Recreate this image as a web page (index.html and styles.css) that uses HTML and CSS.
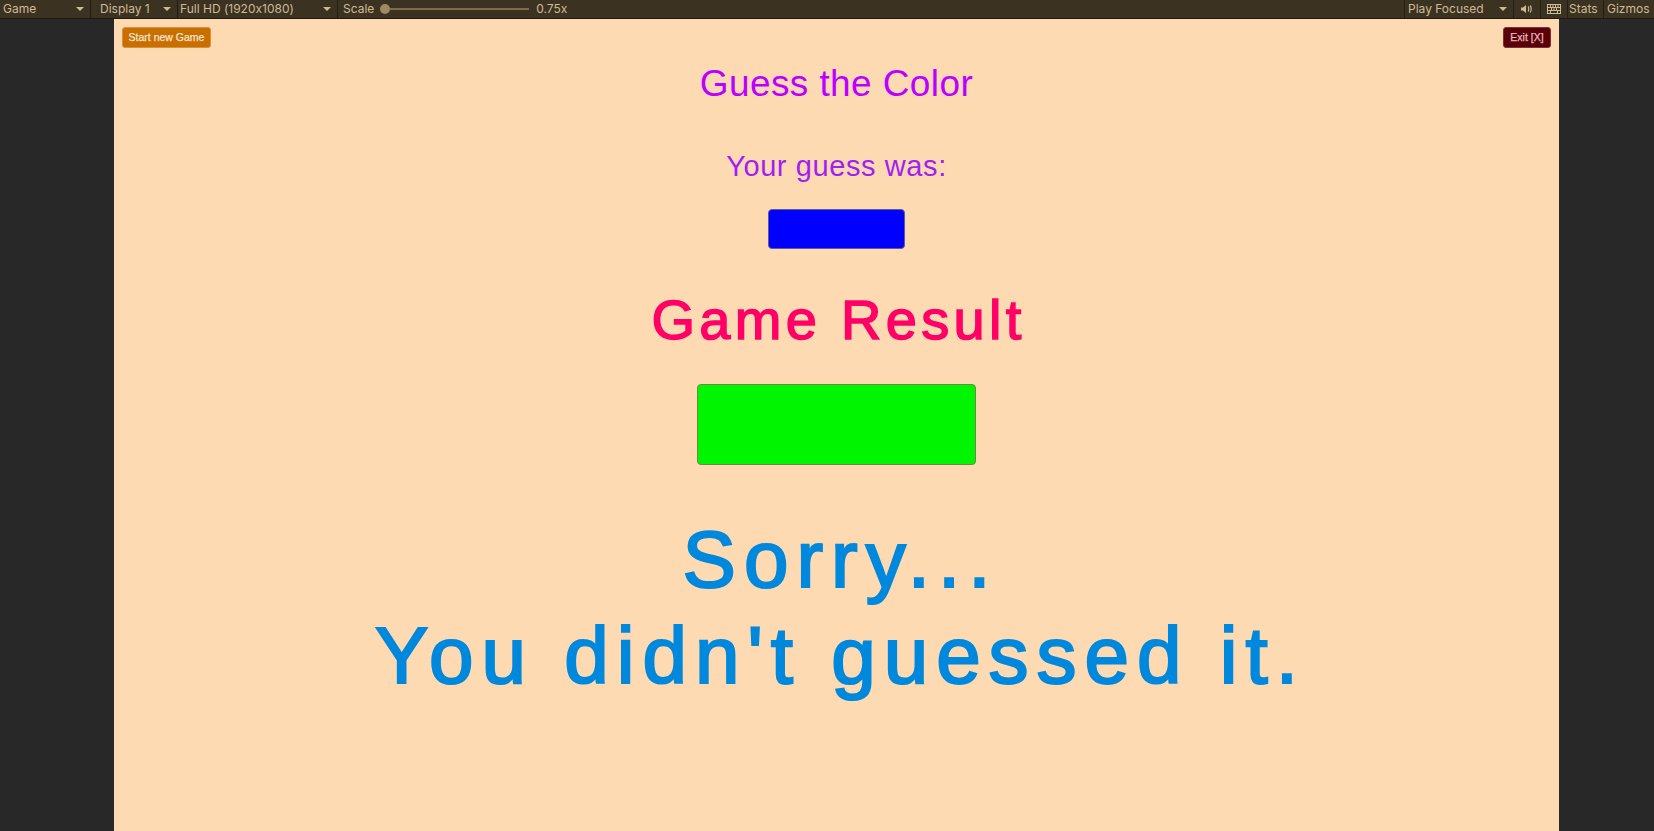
FILE: index.html
```html
<!DOCTYPE html>
<html lang="en">
<head>
<meta charset="utf-8">
<title>Game</title>
<link rel="stylesheet" href="styles.css">
</head>
<body>
<div class="toolbar">
  <div class="tb-item dd w-game"><span>Game</span><span class="arrow"></span></div>
  <div class="tb-item dd w-display"><span>Display 1</span><span class="arrow"></span></div>
  <div class="tb-item dd w-res"><span>Full HD (1920x1080)</span><span class="arrow"></span></div>
  <div class="tb-scale">
    <span>Scale</span>
    <div class="slider"><span class="knob"></span><span class="track"></span></div>
    <span class="scale-val">0.75x</span>
  </div>
  <div class="tb-spacer"></div>
  <div class="tb-item dd w-play"><span>Play Focused</span><span class="arrow"></span></div>
  <div class="tb-item tb-icon">
    <svg width="12" height="8" viewBox="0 0 12 8"><path d="M0 2.5h2l3-2.5v8l-3-2.5h-2z" fill="#cdbb94"/><path d="M7 1.5c1 .8 1 4.2 0 5M9 .5c1.6 1.3 1.6 5.7 0 7" stroke="#cdbb94" stroke-width="1.2" fill="none"/></svg>
  </div>
  <div class="tb-item tb-icon">
    <svg width="14" height="10" viewBox="0 0 14 10"><rect x=".5" y=".5" width="13" height="9" fill="none" stroke="#cdbb94"/><path d="M1 3.5h12M1 6.5h12M3.5 1v2.5M6 1v2.5M8.5 1v2.5M11 1v2.5M4.5 3.5v3M7 3.5v3M9.5 3.5v3M3.5 6.5v3M10.5 6.5v3" stroke="#cdbb94" stroke-width="1" fill="none"/></svg>
  </div>
  <div class="tb-item w-stats"><span>Stats</span></div>
  <div class="tb-item w-gizmos"><span>Gizmos</span></div>
</div>
<div class="main">
  <div class="side side-left"></div>
  <div class="game">
    <div class="game-head">
      <button class="btn btn-start">Start new Game</button>
      <button class="btn btn-exit">Exit [X]</button>
    </div>
    <h1 class="title">Guess the Color</h1>
    <p class="guess-label">Your guess was:</p>
    <div class="swatch swatch-guess"></div>
    <h2 class="result-title">Game Result</h2>
    <div class="swatch swatch-result"></div>
    <p class="verdict">Sorry...<br>You didn't guessed it.</p>
  </div>
  <div class="side side-right"></div>
</div>
</body>
</html>
```
FILE: styles.css
```css
* { box-sizing: border-box; }
html, body { margin: 0; padding: 0; }
body {
  width: 1654px;
  height: 831px;
  overflow: hidden;
  background: #282828;
  font-family: "Liberation Sans", Arial, sans-serif;
}

/* ---------- Toolbar ---------- */
.toolbar {
  height: 19px;
  display: flex;
  background: #3b3222;
  border-bottom: 1px solid #1e1a12;
  color: #cdbb94;
  font-family: Inter, "Noto Sans", sans-serif;
  font-feature-settings: "calt" 0;
  font-size: 12px;
  line-height: 18px;
}
.tb-item {
  display: flex;
  align-items: center;
  padding: 0 3px 0 3px;
  border-right: 1px solid #231e14;
  height: 18px;
  white-space: nowrap;
}
.tb-item.dd { justify-content: space-between; padding-right: 6px; }
.w-game { width: 91px; }
.w-display { width: 87px; padding-left: 9px; }
.w-res { width: 160px; padding-left: 2px; }
.w-play { width: 110px; padding-left: 3px; border-left: 1px solid #231e14; }
.tb-icon { width: 27px; justify-content: center; padding: 0; }
.w-stats { width: 36px; padding-left: 1px; }
.w-gizmos { width: 50px; padding-left: 3px; border-right: none; }
.arrow {
  width: 0; height: 0;
  border-left: 4px solid transparent;
  border-right: 4px solid transparent;
  border-top: 4px solid #cdbb94;
}
.tb-scale {
  display: flex;
  align-items: center;
  padding-left: 5px;
  height: 18px;
}
.slider {
  display: flex;
  align-items: center;
  margin-left: 6px;
}
.knob {
  width: 10px; height: 10px;
  border-radius: 50%;
  background: #9c8b61;
  flex: none;
}
.track {
  height: 2px;
  width: 139px;
  background: #7d6d4b;
}
.scale-val { margin-left: 7px; }
.tb-spacer { flex: 1; }

/* ---------- Main ---------- */
.main {
  display: flex;
  height: 812px;
}
.side { background: #282828; }
.side-left { width: 114px; }
.side-right { flex: 1; }
.game {
  width: 1445px;
  background: #fedab2;
  display: flex;
  flex-direction: column;
  align-items: center;
}
.game-head {
  align-self: stretch;
  display: flex;
  justify-content: space-between;
  padding: 8px 8px 0;
}
.btn {
  height: 21px;
  border-radius: 3px;
  font-family: "Liberation Sans", Arial, sans-serif;
  font-size: 10.5px;
  padding: 0;
  line-height: 19px;
  white-space: nowrap;
  text-align: center;
  cursor: pointer;
  -webkit-text-stroke: 0.25px currentColor;
}
.btn-start {
  width: 89px;
  background: #c86f00;
  border: 1px solid #d9913c;
  color: #f6e4d0;
}
.btn-exit {
  width: 48px;
  background: #5a0008;
  border: 1px solid #80303a;
  color: #e8b8bf;
}

.title {
  margin: 14px 0 0;
  font-size: 37px;
  line-height: 44px;
  font-weight: normal;
  letter-spacing: 0.4px;
  color: #bc00ff;
}
.guess-label {
  margin: 43px 0 0;
  font-size: 29px;
  line-height: 34px;
  letter-spacing: 0.6px;
  color: #a21ef2;
}
.swatch {
  border-radius: 4px;
  border: 1px solid #8a7a60;
}
.swatch-guess {
  margin-top: 26px;
  width: 137px;
  height: 40px;
  background: #0000fe;
  border-color: #5c5c9a;
}
.result-title {
  margin: 39px 0 0;
  font-size: 56px;
  line-height: 64px;
  font-weight: normal;
  letter-spacing: 4.3px;
  padding-left: 4px;
  color: #ff0066;
  -webkit-text-stroke: 1.5px #ff0066;
}
.swatch-result {
  margin-top: 32px;
  width: 279px;
  height: 81px;
  background: #00f500;
  border-color: #6b8a40;
}
.verdict {
  margin: 47px 0 0;
  font-size: 80px;
  line-height: 96px;
  text-align: center;
  letter-spacing: 8px;
  padding-left: 8px;
  color: #0088dd;
  -webkit-text-stroke: 2.2px #0088dd;
}
```
